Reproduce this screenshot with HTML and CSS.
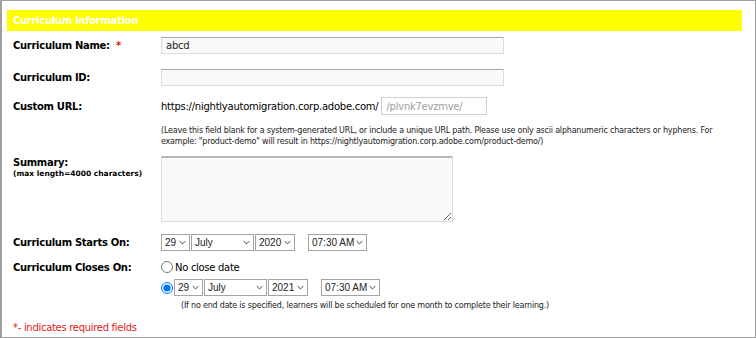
FILE: index.html
```html
<!DOCTYPE html>
<html lang="en">
<head>
  <meta charset="UTF-8">
  <title>Curriculum Information</title>
  <link rel="stylesheet" href="styles.css">
</head>
<body>
  <div class="panel">
    <div class="panel-header">Curriculum Information</div>

    <div class="row row-name">
      <label class="field-label">Curriculum Name: <span class="req">*</span></label>
      <input type="text" class="text-field" value="abcd">
    </div>

    <div class="row row-id">
      <label class="field-label">Curriculum ID:</label>
      <input type="text" class="text-field">
    </div>

    <div class="row row-url">
      <label class="field-label">Custom URL:</label>
      <div class="url-line">
        <span class="url-base">https://nightlyautomigration.corp.adobe.com/</span>
        <input type="text" class="url-field" placeholder="/plvnk7evzmve/">
      </div>
    </div>

    <div class="row row-help">
      <span></span>
      <p class="help">(Leave this field blank for a system-generated URL, or include a unique URL path. Please use only ascii alphanumeric characters or hyphens. For example: "product-demo" will result in https://nightlyautomigration.corp.adobe.com/product-demo/)</p>
    </div>

    <div class="row row-summary">
      <label class="field-label">Summary:<small>(max length=4000 characters)</small></label>
      <textarea class="summary-field"></textarea>
    </div>

    <div class="row row-starts">
      <label class="field-label">Curriculum Starts On:</label>
      <div class="date-line">
        <div class="select sel-day">29<svg viewBox="0 0 10 6"><path d="M1 1l4 4 4-4"/></svg></div>
        <div class="select sel-month">July<svg viewBox="0 0 10 6"><path d="M1 1l4 4 4-4"/></svg></div>
        <div class="select sel-year">2020<svg viewBox="0 0 10 6"><path d="M1 1l4 4 4-4"/></svg></div>
        <div class="select sel-time">07:30 AM<svg viewBox="0 0 10 6"><path d="M1 1l4 4 4-4"/></svg></div>
      </div>
    </div>

    <div class="row row-closes">
      <label class="field-label">Curriculum Closes On:</label>
      <label class="radio-line"><input type="radio" name="close"> No close date</label>
    </div>

    <div class="row row-closes-date">
      <span></span>
      <div class="date-line">
        <input type="radio" name="close" checked>
        <div class="select sel-day">29<svg viewBox="0 0 10 6"><path d="M1 1l4 4 4-4"/></svg></div>
        <div class="select sel-month">July<svg viewBox="0 0 10 6"><path d="M1 1l4 4 4-4"/></svg></div>
        <div class="select sel-year">2021<svg viewBox="0 0 10 6"><path d="M1 1l4 4 4-4"/></svg></div>
        <div class="select sel-time">07:30 AM<svg viewBox="0 0 10 6"><path d="M1 1l4 4 4-4"/></svg></div>
      </div>
    </div>

    <div class="row row-end-help">
      <span></span>
      <p class="help end-help">(If no end date is specified, learners will be scheduled for one month to complete their learning.)</p>
    </div>

    <p class="required-note">*- indicates required fields</p>
  </div>
</body>
</html>
```

FILE: styles.css
```css
body {
    margin: 0;
    font-family: "DejaVu Sans", Verdana, sans-serif;
    font-size: 10px;
    color: #000;
    background: #fff;
}
.panel {
    width: 756px;
    height: 338px;
    box-sizing: border-box;
    border: 1px solid #a0a0a0;
    border-left-width: 2px;
    padding: 9px 13px 0 5px;
    overflow: hidden;
}
.panel-header {
    background-color: #ffff00;
    color: #fff;
    font-weight: bold;
    font-size: 10px;
    letter-spacing: -0.3px;
    height: 21px;
    line-height: 21px;
    padding-left: 6px;
}
.row {
    display: grid;
    grid-template-columns: 148px 1fr;
    align-items: center;
    padding-left: 6px;
}
.field-label {
    font-weight: bold;
    font-size: 10px;
    letter-spacing: -0.3px;
    white-space: nowrap;
}
.req {
    color: #e02020;
    margin-left: 3px;
}
.text-field {
    width: 343px;
    height: 17px;
    box-sizing: border-box;
    margin: 0;
    border: 1px solid #dcdcdc;
    border-top-color: #a8a8a8;
    background: #fafafa;
    font-family: "DejaVu Sans", Verdana, sans-serif;
    font-size: 10px;
    letter-spacing: -0.2px;
    padding: 0 4px;
    color: #222;
}
.row-name { margin-top: 6px; }
.row-id { margin-top: 15px; }
.row-url { margin-top: 11px; }
.url-line {
    display: flex;
    align-items: center;
    gap: 3px;
}
.url-base {
    font-size: 10px;
    letter-spacing: -0.25px;
}
.url-field {
    width: 106px;
    height: 18px;
    box-sizing: border-box;
    margin: 0;
    border: 1px solid #cfcfcf;
    background: #fff;
    font-family: "DejaVu Sans", Verdana, sans-serif;
    font-size: 10px;
    letter-spacing: -0.25px;
    padding: 0 4px;
}
.url-field::placeholder {
    color: #a0a0a0;
}
.row-help { margin-top: 10px; }
.help {
    margin: 0;
    font-size: 8px;
    letter-spacing: -0.2px;
    line-height: 11px;
    color: #222;
}
.row-summary {
    margin-top: 9px;
    align-items: start;
}
.field-label small {
    display: block;
    font-size: 7.5px;
    letter-spacing: 0;
    margin-top: 1px;
}
.row-summary .field-label {
    padding-top: 1px;
}
.summary-field {
    width: 292px;
    height: 66px;
    box-sizing: border-box;
    margin: 0;
    border: 1px solid #dcdcdc;
    border-top: 2px solid #b8b8b8;
    background: #fafafa;
    resize: vertical;
}
.row-starts { margin-top: 12px; }
.date-line {
    display: flex;
    align-items: center;
}
.select {
    display: flex;
    align-items: center;
    justify-content: space-between;
    height: 17px;
    box-sizing: border-box;
    border: 1px solid #a4a4a4;
    background: #fff;
    font-family: "Liberation Sans", Arial, sans-serif;
    font-size: 10px;
    white-space: nowrap;
    color: #222;
    padding: 0 3px;
    margin-right: 1px;
}
.select svg {
    width: 7px;
    height: 5px;
    fill: none;
    stroke: #333;
    stroke-width: 1.3;
    flex-shrink: 0;
}
.sel-day { width: 29px; }
.sel-month { width: 63px; }
.sel-year { width: 40px; }
.sel-time {
    width: 59px;
    margin-left: 12px;
}
.row-closes { margin-top: 10px; }
.radio-line {
    display: flex;
    align-items: center;
    font-size: 10px;
    letter-spacing: -0.3px;
}
input[type="radio"] {
    width: 12px;
    height: 12px;
    margin: 0 2px 0 0;
}
.row-closes-date { margin-top: 6px; }
.row-closes-date input[type="radio"] {
    margin-right: 1px;
}
.row-end-help { margin-top: 4px; }
.end-help {
    padding-left: 20px;
}
.required-note {
    margin: 11px 0 0 6px;
    color: #e02020;
    font-size: 10px;
    letter-spacing: -0.3px;
}
```
